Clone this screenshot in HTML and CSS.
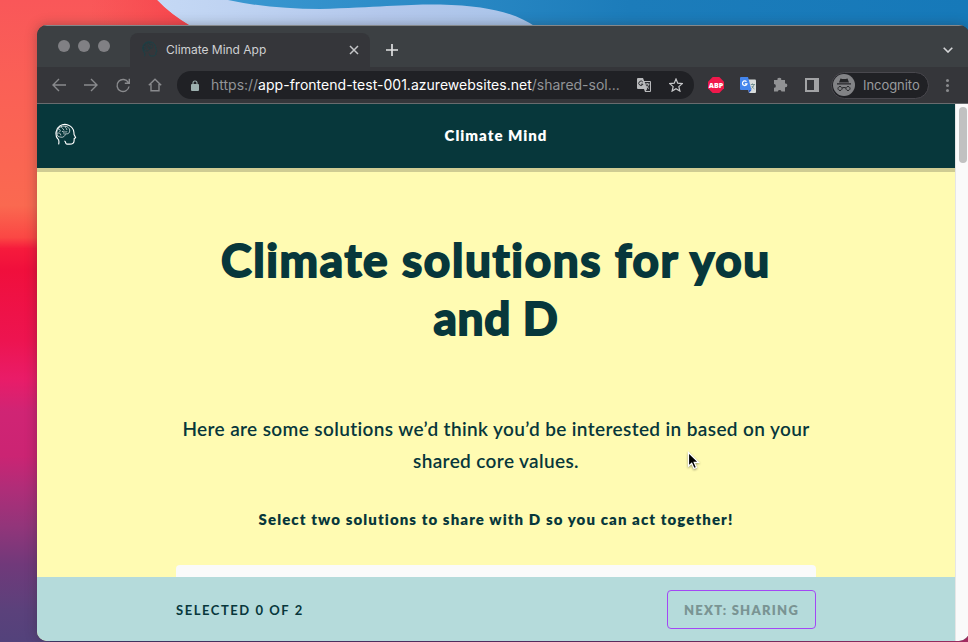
FILE: index.html
```html
<!DOCTYPE html>
<html lang="en">
<head>
<meta charset="utf-8">
<title>Climate Mind App</title>
<link rel="stylesheet" href="styles.css">
</head>
<body>
<svg class="wallpaper" viewBox="0 0 968 642" preserveAspectRatio="none" aria-hidden="true">
  <defs>
    <linearGradient id="side" x1="0" y1="0" x2="0" y2="642" gradientUnits="userSpaceOnUse">
      <stop offset="0" stop-color="#f95759"/><stop offset=".13" stop-color="#fa6056"/><stop offset=".32" stop-color="#fa6950"/><stop offset=".37" stop-color="#fb4744"/><stop offset=".387" stop-color="#f61b3c"/><stop offset=".42" stop-color="#f00f3c"/><stop offset=".53" stop-color="#ed1450"/><stop offset=".59" stop-color="#e91c68"/><stop offset=".64" stop-color="#d02474"/><stop offset=".71" stop-color="#cb2473"/><stop offset=".76" stop-color="#b02d78"/><stop offset=".82" stop-color="#92357a"/><stop offset=".88" stop-color="#70397a"/><stop offset=".95" stop-color="#5b417b"/><stop offset="1" stop-color="#53427b"/>
    </linearGradient>
    <linearGradient id="sky"><stop offset=".2" stop-color="#3d9ad3"/><stop offset=".65" stop-color="#1c7cba"/><stop offset="1" stop-color="#1679b9"/></linearGradient>
    <linearGradient id="wave" x1="150" x2="540" gradientUnits="userSpaceOnUse"><stop offset="0" stop-color="#c5d9f5"/><stop offset=".6" stop-color="#b4c8ec"/><stop offset="1" stop-color="#a9c4e9"/></linearGradient>
    <linearGradient id="floor"><stop offset="0" stop-color="#40376c"/><stop offset=".6" stop-color="#612b68"/><stop offset="1" stop-color="#b02d68"/></linearGradient>
    <linearGradient id="red" x1="90" x2="190" gradientUnits="userSpaceOnUse"><stop offset="0" stop-color="#f74b50" stop-opacity="0"/><stop offset="1" stop-color="#f6444c"/></linearGradient>
  </defs>
  <rect width="968" height="642" fill="url(#sky)"/>
  <path d="M150 0H228Q270 9 320 9C380 7 410 4 440 4.500C490 6 515 13 536 27V40H150Z" fill="url(#wave)"/>
  <path d="M0 0H157Q170 14 192 27V642H0Z" fill="url(#side)"/>
  <path d="M80 0H157Q170 14 192 27H80Z" fill="url(#red)"/>
  <rect y="636" x="50" width="918" height="6" fill="url(#floor)"/>
</svg>
<div class="window">
  <div class="tabs">
    <div class="lights"><i></i><i></i><i></i></div>
    <div class="tab">
      <svg class="favicon" viewBox="0 0 24 24"><use href="#head"/></svg>
      <span class="tab-title">Climate Mind App</span>
      <svg class="close" viewBox="0 0 10 10"><path d="M1 1l8 8M9 1L1 9"/></svg>
    </div>
    <svg class="plus" viewBox="0 0 12 12"><path d="M6 0v12M0 6h12"/></svg>
    <svg class="chevron" viewBox="0 0 10 6"><path d="M.7.7L5 5 9.300.7"/></svg>
  </div>
  <div class="toolbar">
    <div class="nav">
      <svg viewBox="0 0 16 16"><path d="M15 8H2M8 2L2 8l6 6"/></svg>
      <svg viewBox="0 0 16 16"><path d="M1 8h13M8 2l6 6-6 6"/></svg>
      <svg viewBox="0 0 16 16"><path d="M13.300 5.500A6 6 0 1 0 14 9.500M14.300 1.800v4.500H9.800"/></svg>
      <svg viewBox="0 0 16 16"><path d="M1.800 8.300L8 2.200l6.200 6.100M4 7v6.800h8V7"/></svg>
    </div>
    <div class="address">
      <svg class="lock" viewBox="0 0 8 11"><path d="M2 5V3a2 2 0 0 1 4 0v2" fill="none" stroke="#9db0af" stroke-width="1.100"/><rect y="4" width="8" height="7" rx="1" fill="#9db0af"/></svg>
      <span class="url">https://<b>app-frontend-test-001.azurewebsites.net</b>/shared-sol...</span>
      <svg class="page-translate" viewBox="0 0 14 14"><path d="M1 0h5l1.200 3H13a1 1 0 0 1 1 1v9a1 1 0 0 1-1 1H8L7 11H1a1 1 0 0 1-1-1V1a1 1 0 0 1 1-1z" fill="#b9babc"/><path d="M7.700 4H13v9H8.700l1.500-2z" fill="#292a2e"/><path d="M8.300 6h4.200M10.300 5v1M11.800 6c-.4 2-1.500 3.300-3 4.200M9 7.500c.6 1.300 1.700 2.200 3 3" fill="none" stroke="#b9babc"/><path d="M5.800 4A2.200 2.200 0 1 0 6 6.200H4" fill="none" stroke="#292a2e"/></svg>
      <svg class="star" viewBox="0 0 14 14"><path d="M7 1l1.750 4.200 4.550.4-3.450 3 1.050 4.500L7 10.700l-3.900 2.400 1.050-4.500L.7 5.600l4.550-.4z"/></svg>
    </div>
    <div class="extensions">
      <svg viewBox="0 0 16 16"><path d="M4.700 0h6.600L16 4.700v6.600L11.300 16H4.700L0 11.300V4.700z" fill="#f0184b"/><text x="8" y="10.800" class="abp" text-anchor="middle" textLength="14.500" lengthAdjust="spacingAndGlyphs">ABP</text></svg>
      <svg viewBox="0 0 16 16"><path d="M6 2.500h9a1 1 0 0 1 1 1V15a1 1 0 0 1-1 1H9z" fill="#d9dddc"/><path d="M1 0h7l3.500 13H1a1 1 0 0 1-1-1V1a1 1 0 0 1 1-1z" fill="#4385ed"/><path d="M8.500 13h3L9 16z" fill="#2759c8"/><path d="M6.500 4.700A2.300 2.300 0 1 0 7 6.800H4.800" stroke="#fff" fill="none" stroke-width="1.200"/><path d="M10.800 7.500H15M12.500 6.500v1M14 7.500c-.5 2-1.500 3-2.500 4M12 9c.5 1.500 1.200 2.200 2.300 3" stroke="#739191" fill="none"/></svg>
      <svg viewBox="0 0 16 16"><path d="M2 3h3.500a1.900 1.900 0 1 1 3.700 0H13v3.500a1.900 1.900 0 1 1 0 3.700V14.500H9.500a1.900 1.900 0 0 0-3.700 0H2v-3.700a1.800 1.800 0 0 0 0-3.700z" fill="#919294"/></svg>
      <svg viewBox="0 0 16 16"><path d="M1 1h14v14H1zM3 3v10h7V3z" fill="#a2a3a5" fill-rule="evenodd"/></svg>
    </div>
    <div class="incognito">
      <svg viewBox="0 0 22 22"><circle cx="11" cy="11" r="11" fill="#828386"/><path d="M7.500 4.500q3.500 1.200 7 0L16 8.600H6zM4 9.200h14v1.300H4z" fill="#242528"/><path d="M7 12.500a2 2 0 1 0 .01 0M15 12.500a2 2 0 1 0 .01 0M9 14q2-1 4 0" fill="none" stroke="#242528"/></svg>
      <span>Incognito</span>
    </div>
    <div class="dots"><i></i><i></i><i></i></div>
  </div>
  <div class="viewport">
    <div class="page">
      <header class="appbar">
        <svg class="logo" viewBox="0 0 24 24">
          <g id="head" fill="none" stroke="currentColor" stroke-linecap="round" stroke-linejoin="round">
            <path d="M2.800 16.500C-.2 12.500.8 5.500 5.300 2.700C11-1 19.700 2 20.600 9.500L20.800 12l1.700 3.200c.2.600-.8.900-1.500.9l-.2 3c0 3-2 3.400-4.800 3.400h-3c-2.400-.4-.6-2.400-2.300-3.200M3 16.500c2 1.700 1.400 3.500 1 5.900" stroke-width="1.250"/>
            <path d="M3.200 13.700C.9 11.200 2 6 5.200 4.300C9 1.300 15.300 3 16.100 7.100c.4 3.400-2.100 4.700-4.800 4.200c-.2 2.600-2.600 4.300-5 3.600q-2-.1-3.100-1.200M4 6.200c2 0 2.200 1.500 1.300 2.700M7 3.700c0 2 2.600 1.600 2.600 3.300M11 3.200c-.3 2 2 1.500 2 3.500M3 10.500c2-.6 3 0 3.300 2M8 8.600c1.700-.3 2.300 1 1.800 2.700M13 9c-1 .6-2 .3-2.500-.3" stroke-width=".75"/>
          </g>
        </svg>
        <div class="brand">Climate Mind</div>
      </header>
      <main class="content">
        <h1><span class="h-first">Climate solutions for you</span><br><span class="h-second">and D</span></h1>
        <p class="intro">Here are some solutions we’d think you’d be interested in based on your<br>shared core values.</p>
        <p class="prompt">Select two solutions to share with D so you can act together!</p>
        <div class="card"></div>
      </main>
      <footer class="bottombar">
        <span class="count">SELECTED 0 OF 2</span>
        <button class="next" disabled>NEXT: SHARING</button>
      </footer>
    </div>
    <div class="scrollbar"><div class="thumb"></div></div>
  </div>
</div>
<svg class="cursor" viewBox="0 0 14 20"><path d="M1.500 1.500v13.700l3.200-3 2.300 5.300 2.500-1-2.300-5.200h4.300z" fill="#000" stroke="#fff" stroke-width="1.200"/></svg>
</body>
</html>
```

FILE: styles.css
```css
* { box-sizing: border-box; }
body { margin: 0; width: 968px; height: 642px; overflow: hidden; position: relative; padding: 25px 0 0 37px; font-family: Inter, "Liberation Sans", sans-serif; }
svg { display: block; flex: none; }
.wallpaper { position: absolute; inset: 0; width: 968px; height: 642px; z-index: -1; }
.window { width: 932px; height: 616px; border-radius: 10px; overflow: hidden; box-shadow: 0 0 12px rgba(40, 40, 40, .35); background: #35363a; display: flex; flex-direction: column; }

.tabs { height: 42px; background: #3c4043; border-top: 1px solid #85888a; display: flex; flex: none; align-items: center; }
.lights { display: flex; gap: 8px; width: 93px; padding-left: 21px; align-self: flex-start; padding-top: 14px; }
.lights i { width: 12px; height: 12px; border-radius: 50%; background: #808084; }
.tab { width: 240px; height: 34px; align-self: flex-end; border-radius: 8px 8px 0 0; background: #35363a; display: flex; align-items: center; padding: 0 11px 2px 12px; color: #cfd0d2; font-size: 12px; }
.favicon { width: 16px; height: 16px; color: #17454b; margin-right: 8px; }
.tab-title { flex: 1; letter-spacing: -.02px; }
.close { width: 10px; height: 10px; fill: none; stroke: #c5c6c8; stroke-width: 1.5; margin-top: 2px; }
.plus { width: 12px; height: 12px; margin-left: 16px; margin-top: 6px; fill: none; stroke: #e0e1e2; stroke-width: 1.7; }
.chevron { width: 10px; height: 6px; margin: 7px 16px 0 auto; fill: none; stroke: #d5d6d8; stroke-width: 1.6; }

.toolbar { height: 37px; flex: none; background: #35363a; border-bottom: 1px solid #696b6e; display: flex; align-items: center; padding-left: 14px; }
.nav { display: flex; gap: 16px; width: 126px; }
.nav svg { width: 16px; height: 16px; fill: none; stroke: #898a8d; stroke-width: 1.4; }
.address { width: 517px; height: 28px; border-radius: 14px; background: #202125; display: flex; align-items: center; padding-left: 14px; }
.lock { width: 8px; height: 11px; margin-right: 12px; }
.url { width: 426px; font-size: 14px; letter-spacing: -.01px; color: #929497; white-space: nowrap; padding-bottom: 1px; }
.url b { font-weight: 400; color: #fff; letter-spacing: .02px; }
.page-translate { width: 14px; height: 14px; }
.star { width: 14px; height: 14px; margin-left: 18px; fill: none; stroke: #c7c8ca; stroke-width: 1.2; }
.extensions { display: flex; gap: 16px; margin-left: 14px; }
.extensions svg { width: 16px; height: 16px; }
.abp { font: 800 7.6px "Open Sans", sans-serif; fill: #fff; }
.incognito { width: 98px; height: 27px; margin-left: 11px; border-radius: 14px; background: #202125; border: 1px solid #49484e; display: flex; align-items: center; gap: 8px; padding-left: 1px; color: #999b9e; font-size: 13px; letter-spacing: -.05px; }
.incognito svg { width: 22px; height: 22px; }
.dots { display: flex; flex-direction: column; gap: 2px; margin-left: 17px; }
.dots i { width: 3px; height: 3px; border-radius: 50%; background: #898a8d; }

.viewport { flex: 1; min-height: 0; display: flex; }
.page { width: 918px; display: flex; flex-direction: column; background: #fffbb2; color: #07373b; font-family: Lato, sans-serif; }
.appbar { height: 64px; flex: none; background: #07373b; color: #fff; display: grid; grid-template-columns: 60px 1fr 60px; align-items: center; box-shadow: 0 4px 0 #cfcc93; }
.logo { width: 22px; height: 23px; margin: -4px 0 0 18px; }
.brand { text-align: center; font-size: 15px; font-weight: 800; letter-spacing: 1px; padding-bottom: 2px; }
.content { flex: 1; min-height: 0; overflow: hidden; text-align: center; display: flex; flex-direction: column; align-items: center; padding-top: 63px; }
h1 { margin: 0; font-size: 46px; line-height: 58px; font-weight: 700; -webkit-text-stroke: 2px #07373b; stroke-linejoin: round; }
.h-first { letter-spacing: 1.64px; }
.h-second { letter-spacing: .7px; }
.intro { margin: 66px 0 0; font-size: 19px; line-height: 32px; font-weight: 600; letter-spacing: .37px; white-space: nowrap; }
.prompt { margin: 32px 0 0; font-size: 15px; line-height: 20px; font-weight: 800; letter-spacing: 1.1px; white-space: nowrap; }
.card { width: 640px; height: 60px; flex: none; margin-top: 36px; border-radius: 4px; background: #fafafa; }
.bottombar { height: 64px; flex: none; background: #b5dbdb; display: flex; align-items: center; justify-content: space-between; padding: 0 139px; }
.count { font-size: 13px; font-weight: 700; letter-spacing: 1.55px; padding-top: 2px; }
.next { width: 149px; height: 39px; padding: 2px 0 0; background: transparent; border: 1px solid #a347f5; border-radius: 4px; font: 800 13px Lato, sans-serif; letter-spacing: 1.25px; color: #7a9493; white-space: nowrap; }
.scrollbar { flex: 1; background: #fafafa; border-left: 1px solid #e6e6e6; padding: 3px 0 0 3px; }
.thumb { width: 8px; height: 56px; border-radius: 4px; background: #c1c1c1; }
.cursor { position: absolute; left: 687px; top: 451px; width: 14px; height: 20px; filter: drop-shadow(0 1px 1px rgba(0, 0, 0, .4)); }
```
